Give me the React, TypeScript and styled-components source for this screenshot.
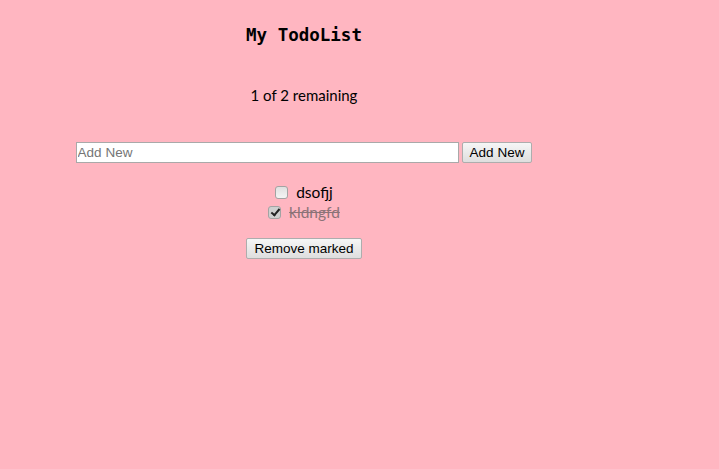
import React, { useState } from "react";
import styled, { createGlobalStyle } from "styled-components";

const Global = createGlobalStyle`
  html, body { background: #ffb6c1; }
  body { margin: 8px; font-family: Lato, "Open Sans", sans-serif; }
`;

const Container = styled.div`
  width: 592px;
  text-align: center;
`;

const Title = styled.h1`
  font-family: "DejaVu Sans Mono", "Liberation Mono", monospace;
  font-size: 17.5px;
  font-weight: bold;
  margin: 16px 0 0;
  line-height: 22px;
`;

const Remaining = styled.p`
  font-size: 15px;
  margin: 39px 0 0;
  line-height: 20px;
`;

const Form = styled.form`
  display: flex;
  justify-content: center;
  gap: 3px;
  margin-top: 37px;
`;

const Input = styled.input`
  width: 383px;
  height: 21px;
  box-sizing: border-box;
  border: 1px solid #a9a9a9;
  font-family: Arial, "Liberation Sans", sans-serif;
  font-size: 13.5px;
  padding: 1px 1px;
  background: #fff;
  &::placeholder { color: #757575; }
`;

const Button = styled.button`
  height: 21px;
  box-sizing: border-box;
  font-family: Arial, "Liberation Sans", sans-serif;
  font-size: 13.5px;
  padding: 0 7px;
  border: 1px solid #adadad;
  border-radius: 2px;
  background: linear-gradient(#f6f6f6, #dedede);
  color: #000;
`;

const List = styled.ul`
  list-style: none;
  padding: 0;
  margin: 19px 0 0;
`;

const Item = styled.li<{ $done: boolean }>`
  display: flex;
  justify-content: center;
  align-items: center;
  height: 20px;
  font-size: 15.5px;
  color: ${(p) => (p.$done ? "#8c7378" : "#000")};
  text-decoration: ${(p) => (p.$done ? "line-through" : "none")};
`;

const Check = styled.input`
  appearance: none;
  -webkit-appearance: none;
  margin: 0 8px 0 0;
  width: 13px;
  height: 13px;
  box-sizing: border-box;
  border: 1px solid #a3a3a3;
  border-radius: 3px;
  background: linear-gradient(#e0e0e0, #f4f4f4);
  position: relative;
  &:checked {
    background: #cfcfcf;
  }
  &:checked::after {
    content: "";
    position: absolute;
    left: 3.5px;
    top: 0.5px;
    width: 3px;
    height: 7px;
    border: solid #222;
    border-width: 0 2px 2px 0;
    transform: rotate(40deg);
  }
`;

const RemoveRow = styled.div`
  margin-top: 15px;
`;

export default function App() {
  const [todos, setTodos] = useState([
    { text: "dsofjj", done: false },
    { text: "kldngfd", done: true },
  ]);
  const remaining = todos.filter((t) => !t.done).length;
  return (
    <>
      <Global />
      <Container>
        <Title>My TodoList</Title>
        <Remaining>
          {remaining} of {todos.length} remaining
        </Remaining>
        <Form onSubmit={(e) => e.preventDefault()}>
          <Input placeholder="Add New" />
          <Button type="submit">Add New</Button>
        </Form>
        <List>
          {todos.map((t, i) => (
            <Item key={i} $done={t.done}>
              <Check
                type="checkbox"
                checked={t.done}
                onChange={() =>
                  setTodos(todos.map((x, j) => (j === i ? { ...x, done: !x.done } : x)))
                }
              />
              {t.text}
            </Item>
          ))}
        </List>
        <RemoveRow>
          <Button type="button" onClick={() => setTodos(todos.filter((t) => !t.done))}>
            Remove marked
          </Button>
        </RemoveRow>
      </Container>
    </>
  );
}
